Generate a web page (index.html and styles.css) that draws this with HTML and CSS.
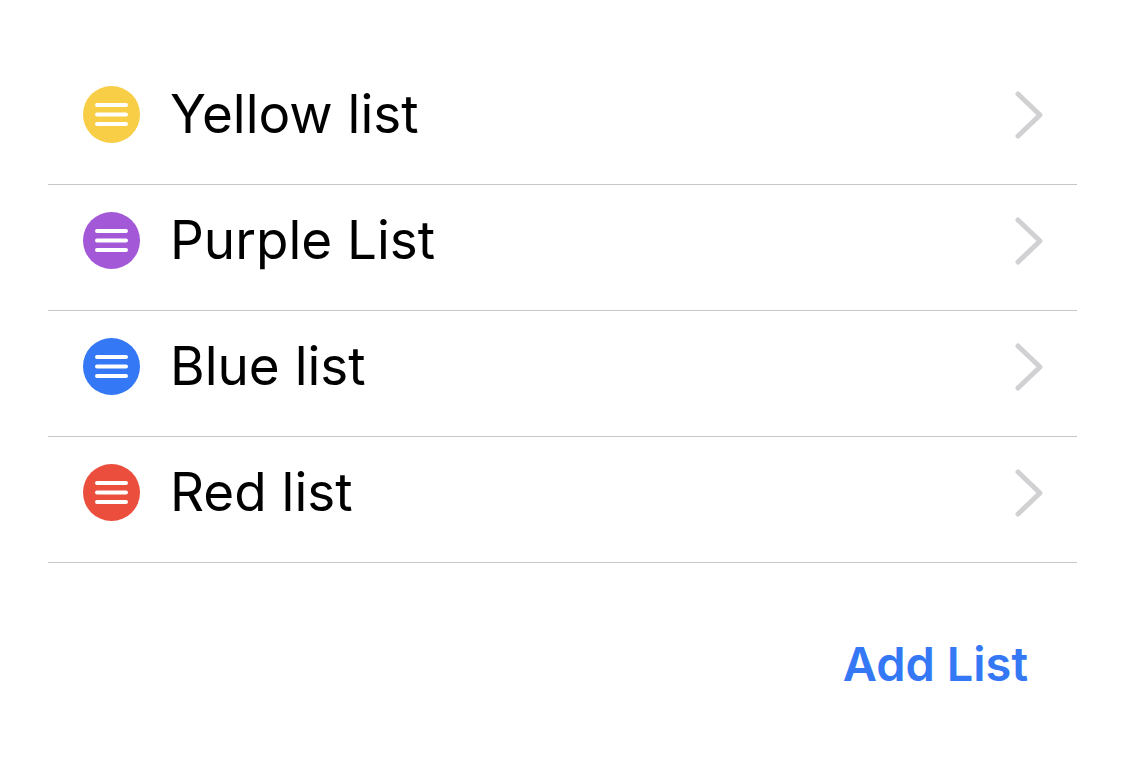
FILE: index.html
```html
<!DOCTYPE html>
<html lang="en">
<head>
    <meta charset="UTF-8">
    <meta name="viewport" content="width=device-width, initial-scale=1">
    <title>Lists</title>
    <link rel="stylesheet" href="styles.css">
</head>
<body>
    <main>
        <ul class="lists">
            <li>
                <a class="row" href="#yellow">
                    <svg class="icon yellow" viewBox="0 0 57 57" aria-hidden="true">
                        <circle cx="28.5" cy="28.5" r="28.5"/>
                        <path d="M14 19h29M14 28.5h29M14 38h29"/>
                    </svg>
                    <span class="name">Yellow list</span>
                    <svg class="chevron" viewBox="0 0 28 50" aria-hidden="true">
                        <path d="M3 4l22 21L3 46"/>
                    </svg>
                </a>
            </li>
            <li>
                <a class="row" href="#purple">
                    <svg class="icon purple" viewBox="0 0 57 57" aria-hidden="true">
                        <circle cx="28.5" cy="28.5" r="28.5"/>
                        <path d="M14 19h29M14 28.5h29M14 38h29"/>
                    </svg>
                    <span class="name">Purple List</span>
                    <svg class="chevron" viewBox="0 0 28 50" aria-hidden="true">
                        <path d="M3 4l22 21L3 46"/>
                    </svg>
                </a>
            </li>
            <li>
                <a class="row" href="#blue">
                    <svg class="icon blue" viewBox="0 0 57 57" aria-hidden="true">
                        <circle cx="28.5" cy="28.5" r="28.5"/>
                        <path d="M14 19h29M14 28.5h29M14 38h29"/>
                    </svg>
                    <span class="name">Blue list</span>
                    <svg class="chevron" viewBox="0 0 28 50" aria-hidden="true">
                        <path d="M3 4l22 21L3 46"/>
                    </svg>
                </a>
            </li>
            <li>
                <a class="row" href="#red">
                    <svg class="icon red" viewBox="0 0 57 57" aria-hidden="true">
                        <circle cx="28.5" cy="28.5" r="28.5"/>
                        <path d="M14 19h29M14 28.5h29M14 38h29"/>
                    </svg>
                    <span class="name">Red list</span>
                    <svg class="chevron" viewBox="0 0 28 50" aria-hidden="true">
                        <path d="M3 4l22 21L3 46"/>
                    </svg>
                </a>
            </li>
        </ul>
        <div class="footer">
            <button class="add" type="button">Add List</button>
        </div>
    </main>
</body>
</html>
```
FILE: styles.css
```css
body {
    margin: 0;
    background: #fff;
    color: #000;
    font-family: Inter, "Liberation Sans", sans-serif;
}
main {
    padding: 59px 48px;
}
.lists {
    margin: 0;
    padding: 0;
    list-style: none;
}
.row {
    display: flex;
    align-items: center;
    padding: 21px 34px 35px 35px;
    border-bottom: 1px solid #c6c6c8;
    color: inherit;
    text-decoration: none;
}
.icon {
    flex: none;
    width: 57px;
    height: 57px;
}
.icon path {
    fill: none;
    stroke: #fff;
    stroke-width: 4;
    stroke-linecap: round;
}
.yellow {
    fill: #f7ce46;
}
.purple {
    fill: #a358d8;
}
.blue {
    fill: #3478f6;
}
.red {
    fill: #eb4e3d;
}
.name {
    flex: 1;
    margin-left: 30px;
    font-size: 53px;
    line-height: 69px;
}
.chevron {
    flex: none;
    width: 28px;
    height: 50px;
    fill: none;
    stroke: #d1d1d3;
    stroke-width: 5;
    stroke-linecap: round;
    stroke-linejoin: round;
}
.footer {
    display: flex;
    justify-content: flex-end;
    padding: 71px 49px 0;
}
.add {
    padding: 0;
    border: 0;
    background: none;
    color: #3478f6;
    font-family: inherit;
    font-size: 47px;
    font-weight: 600;
    line-height: 60px;
    cursor: pointer;
}
```
